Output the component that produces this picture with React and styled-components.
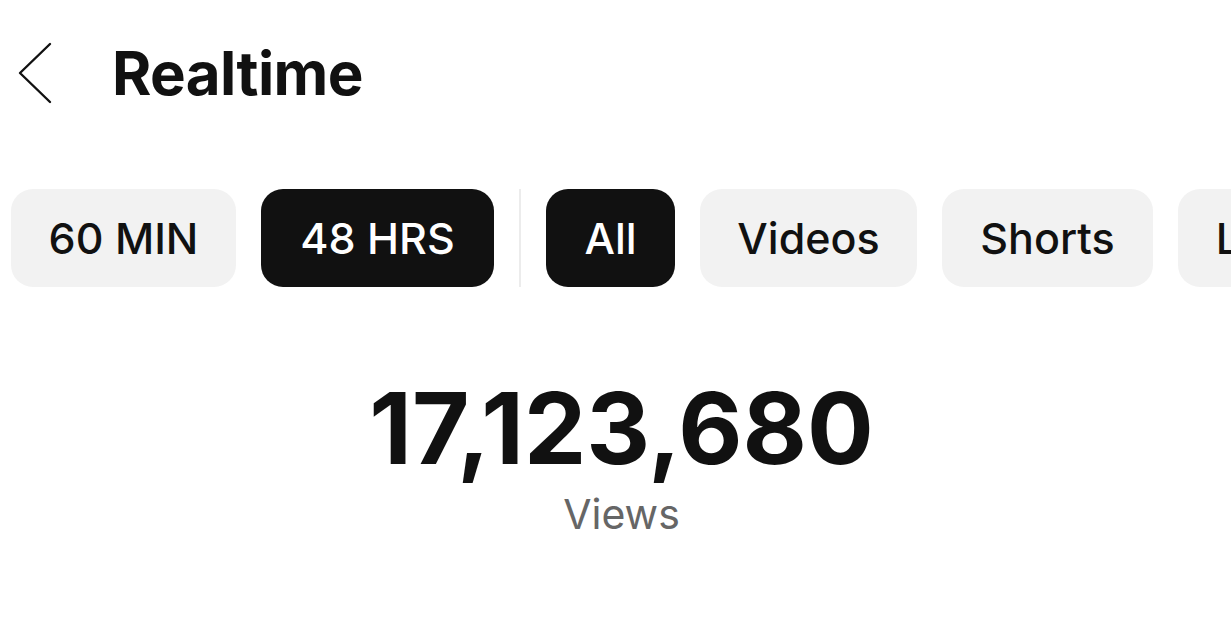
import React from "react";
import styled, { createGlobalStyle } from "styled-components";

const Global = createGlobalStyle`
  html, body { margin: 0; padding: 0; background: #fff; }
  body { font-family: Inter, "Noto Sans", sans-serif; color: #111; overflow: hidden; }
`;

const Page = styled.div`
  width: 1231px;
  height: 641px;
  overflow: hidden;
  display: flex;
  flex-direction: column;
`;

const Header = styled.header`
  display: flex;
  align-items: center;
  height: 148px;
  padding-left: 17px;
  box-sizing: border-box;
  padding-bottom: 2px;
`;

const BackButton = styled.button`
  all: unset;
  display: flex;
  width: 36px;
  height: 64px;
  margin-right: 59px;
  cursor: pointer;
`;

const Title = styled.h1`
  margin: 0;
  font-size: 60px;
  font-weight: 700;
  letter-spacing: -0.6px;
  line-height: 1;
`;

const FilterRow = styled.div`
  display: flex;
  align-items: stretch;
  gap: 25px;
  padding-left: 11px;
  margin-top: 41px;
  height: 98px;
  flex-wrap: nowrap;
`;

const Pill = styled.button`
  all: unset;
  flex: 0 0 auto;
  display: flex;
  align-items: center;
  justify-content: center;
  box-sizing: border-box;
  width: ${(p) => p.$w}px;
  height: 98px;
  border-radius: 22px;
  background: ${(p) => (p.$active ? "#111" : "#f2f2f2")};
  color: ${(p) => (p.$active ? "#fff" : "#111")};
  font-size: 43px;
  font-weight: 500;
  letter-spacing: 0;
  white-space: nowrap;
`;

const Divider = styled.div`
  flex: 0 0 auto;
  width: 2px;
  background: #ececec;
`;

const Stat = styled.section`
  display: flex;
  flex-direction: column;
  align-items: center;
  padding-left: 12px;
  margin-top: 92px;
`;

const BigNumber = styled.div`
  font-size: 99px;
  font-weight: 700;
  letter-spacing: 0;
  line-height: 1;
`;

const Label = styled.div`
  font-size: 41px;
  font-weight: 400;
  color: #666;
  margin-top: 16px;
  line-height: 1;
`;

function ChevronLeft() {
  return (
    <svg width="36" height="64" viewBox="0 0 36 64" fill="none">
      <path d="M33 3 L3 32 L33 61" stroke="#111" strokeWidth="2.4" strokeLinecap="round" strokeLinejoin="round" />
    </svg>
  );
}

export default function App() {
  return (
    <Page>
      <Global />
      <Header>
        <BackButton aria-label="Back">
          <ChevronLeft />
        </BackButton>
        <Title>Realtime</Title>
      </Header>
      <FilterRow>
        <Pill $w={225}>60 MIN</Pill>
        <Pill $w={233} $active>48 HRS</Pill>
        <Divider />
        <Pill $w={129} $active>All</Pill>
        <Pill $w={217}>Videos</Pill>
        <Pill $w={211}>Shorts</Pill>
        <Pill $w={160}>Live</Pill>
      </FilterRow>
      <Stat>
        <BigNumber>17,123,680</BigNumber>
        <Label>Views</Label>
      </Stat>
    </Page>
  );
}
